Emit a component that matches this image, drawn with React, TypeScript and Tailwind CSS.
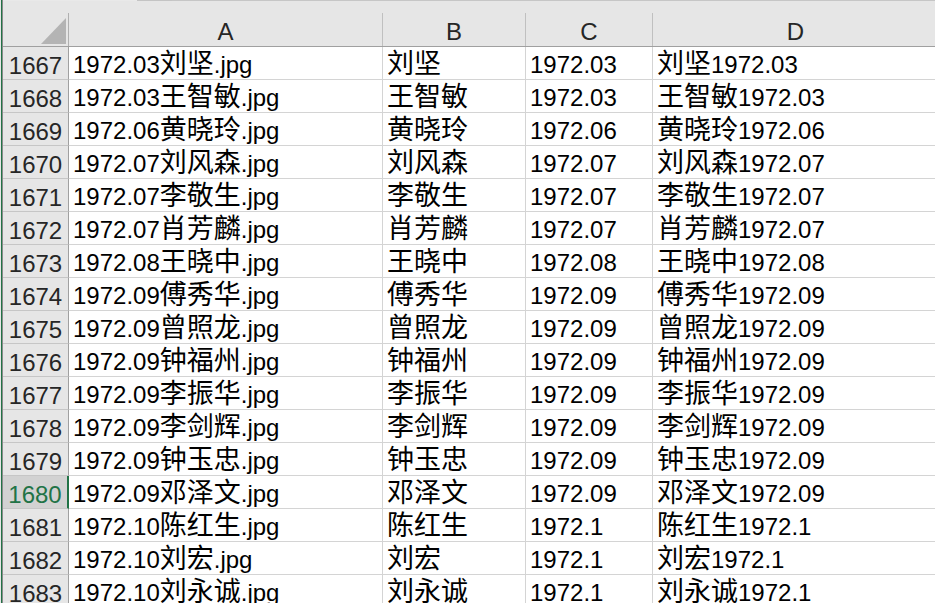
// 表格截图：行号 + A~D 四列
const ROWS: [number, string, string][] = [
  [1667, '1972.03', '刘坚'],
  [1668, '1972.03', '王智敏'],
  [1669, '1972.06', '黄晓玲'],
  [1670, '1972.07', '刘风森'],
  [1671, '1972.07', '李敬生'],
  [1672, '1972.07', '肖芳麟'],
  [1673, '1972.08', '王晓中'],
  [1674, '1972.09', '傅秀华'],
  [1675, '1972.09', '曾照龙'],
  [1676, '1972.09', '钟福州'],
  [1677, '1972.09', '李振华'],
  [1678, '1972.09', '李剑辉'],
  [1679, '1972.09', '钟玉忠'],
  [1680, '1972.09', '邓泽文'],
  [1681, '1972.10', '陈红生'],
  [1682, '1972.10', '刘宏'],
  [1683, '1972.10', '刘永诚'],
]

const SELECTED = 1680

// 中文部分用更大的 CJK 字体，数字用 Liberation Sans
function Txt({ s }: { s: string }) {
  const parts = s.split(/([\u4e00-\u9fff]+)/).filter(Boolean)
  return (
    <>
      {parts.map((p, i) =>
        /[\u4e00-\u9fff]/.test(p) ? (
          <span key={i} className="font-['Noto_Sans_CJK_SC',sans-serif] text-[27px] leading-[20px]">
            {p}
          </span>
        ) : (
          <span key={i}>{p}</span>
        )
      )}
    </>
  )
}

function Cell({ w, children }: { w: string; children: React.ReactNode }) {
  return (
    <div
      className={`${w} shrink-0 h-full border-r border-[#d4d4d4] pl-[4px] pt-[4px] leading-[28px] whitespace-nowrap overflow-hidden text-black`}
    >
      {children}
    </div>
  )
}

export default function App() {
  return (
    <div className="w-[935px] h-[603px] overflow-hidden bg-white flex font-['Liberation_Sans',Arial,sans-serif] text-[24px]">
      <div className="flex w-[3px] shrink-0">
        <div className="w-px bg-[#e6e6e6]" />
        <div className="w-px bg-[#217346]" />
        <div className="w-px bg-[#8a8a8a]" />
      </div>

      <div className="flex flex-col flex-1 min-w-0">
        <div className="h-px shrink-0 flex">
          <div className="w-[134px] bg-[#e9e9e9]" />
          <div className="w-[35px] bg-[#c4c4c4]" />
          <div className="flex-1 bg-[#c6c6c6]" />
        </div>
        <div className="h-[12px] shrink-0 bg-[#e6e6e6]" />

        {/* 列标题 */}
        <div className="h-[34px] shrink-0 flex bg-[#e6e6e6] border-b border-[#a0a0a0] text-[#262626] leading-[30px]">
          <div className="w-[66px] shrink-0 border-r border-[#b0b0b0] flex justify-end items-end pr-[2px] pb-[2px]">
            <svg width="25" height="26" viewBox="0 0 25 26">
              <polygon points="0,26 25,26 25,0" fill="#b4b4b4" />
            </svg>
          </div>
          {[
            ['A', 'w-[314px]'],
            ['B', 'w-[143px]'],
            ['C', 'w-[127px]'],
            ['D', 'w-[286px]'],
          ].map(([l, w]) => (
            <div key={l} className={`${w} shrink-0 border-r border-[#c0c0c0] text-center pt-[4px]`}>
              {l}
            </div>
          ))}
        </div>

        {ROWS.map(([n, date, name]) => {
          const sel = n === SELECTED
          const short = String(parseFloat(date))
          return (
            <div key={n} className="h-[33px] shrink-0 flex">
              <div
                className={`w-[66px] shrink-0 h-full text-center pt-[7px] leading-[24px] ${
                  sel
                    ? 'bg-[#d2d2d2] text-[#217346] border-r-2 border-r-[#217346] border-b border-b-[#c6c6c6]'
                    : 'bg-[#e6e6e6] text-[#262626] border-r border-r-[#a0a0a0] border-b border-b-[#c6c6c6]'
                }`}
              >
                {n}
              </div>
              <div className="flex flex-1 min-w-0 border-b border-[#d4d4d4]">
                <Cell w="w-[314px]">
                  <Txt s={`${date}${name}.jpg`} />
                </Cell>
                <Cell w="w-[143px]">
                  <Txt s={name} />
                </Cell>
                <Cell w="w-[127px]">{short}</Cell>
                <Cell w="w-[286px]">
                  <Txt s={`${name}${short}`} />
                </Cell>
              </div>
            </div>
          )
        })}
      </div>
    </div>
  )
}
